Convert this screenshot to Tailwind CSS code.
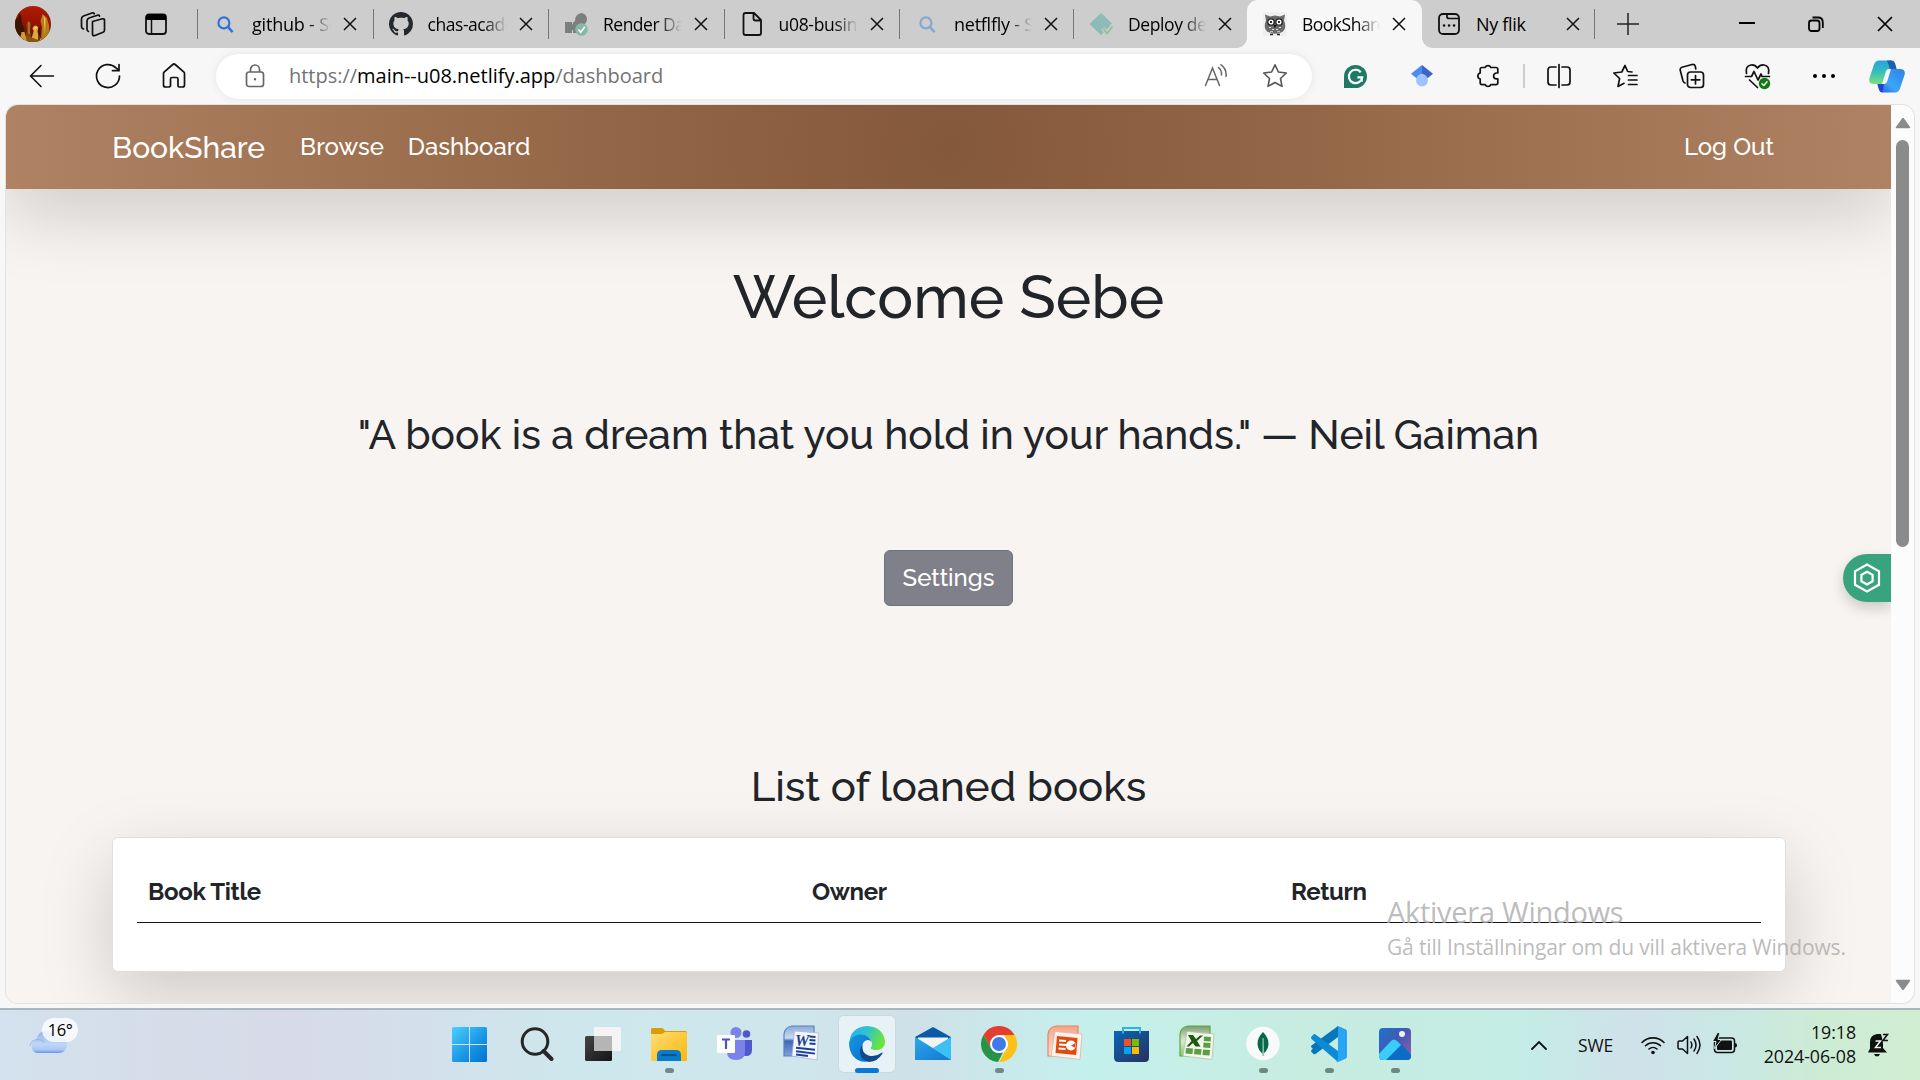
<!DOCTYPE html>
<html lang="sv">
<head>
<meta charset="utf-8">
<title>BookShare</title>
<script src="https://cdn.jsdelivr.net/npm/@tailwindcss/browser@4"></script>
</head>
<body class="w-[1920px] h-[1080px] overflow-hidden flex flex-col bg-[#f7f7f7] font-['Open_Sans','Noto_Sans',sans-serif] text-black">
<svg class="hidden">
  <symbol id="x" viewBox="0 0 14 14"><path d="M1 1l12 12M13 1L1 13" fill="none" stroke="#111" stroke-width="1.5"/></symbol>
  <symbol id="mag" viewBox="0 0 18 18"><path d="M11.8 11.8L16.5 17" stroke="currentColor" stroke-width="2.6" fill="none"/><circle cx="7.3" cy="7.3" r="5.8" fill="none" stroke="currentColor" stroke-width="2.3"/></symbol>
</svg>

<!-- Tab strip -->
<header class="h-12 shrink-0 bg-[#cdcdcd] flex items-center">
  <div class="w-[197px] flex items-center pl-[15px]">
    <svg class="w-9 h-9" viewBox="0 0 36 36"><defs><clipPath id="av"><circle cx="18" cy="18" r="18"/></clipPath><linearGradient id="avg" x1="0" y1="0" x2="0" y2="1"><stop offset="0" stop-color="#b01e04"/><stop offset=".5" stop-color="#960f00"/><stop offset="1" stop-color="#3a1a04"/></linearGradient></defs>
      <g clip-path="url(#av)"><path d="M0 0h36v36H0z" fill="url(#avg)"/><path d="M0 36V14l3-2 1-5 2 3 1 8 2 4v14z" fill="#3a1503"/><path d="M10 34l2-10-1-5 2.500-5 2.500 4-1 6 2 10z" fill="#7a4710"/><path d="M13 16h2v12h-2z" fill="#a8701c"/><path d="M26 34l1-13-1.500-6 2-7 4.500 4 2 7 1 15z" fill="#b67a18"/><path d="M28.500 9l2 4-.5 16z" fill="#f0c254"/><path d="M16.500 36c0-6 2-8 2-11.500a2.800 2.800 0 1 1 4 0c0 4 3 5 4 11.500z" fill="#e0a638"/><path d="M0 31q8-4 18 1t18-1v5H0z" fill="#8a5210"/><circle cx="20.500" cy="22" r="1.300" fill="#f4d27a"/><path d="M5 36l1.500-10h3L12 36z" fill="#d69a35"/><path d="M24 22v12" stroke="#3a1503" stroke-width="1.500"/></g></svg>
    <svg class="w-7 h-7 ml-[28px]" viewBox="0 0 28 28" fill="none" stroke="#111" stroke-width="1.7" stroke-linejoin="round" stroke-linecap="round"><path d="M13.500 11.500l10-2.700q2-.4 2 1.600v9.800q0 1.500-1.500 2l-8 3.300q-2.500.8-2.500-1.500z"/><path d="M9.500 21.500q-1.500-.5-1.500-2.500V11q0-2 2-3l8.500-2.800q1.800-.3 2 1"/><path d="M4.500 19q-2-.5-2-3V9q0-2 2-3L13 3q1.800-.4 2.200.8"/></svg>
    <svg class="w-6 h-6 ml-[37px]" viewBox="0 0 24 24"><rect x="2" y="2.500" width="20" height="19.500" rx="3" fill="none" stroke="#111" stroke-width="1.8"/><path d="M2 5q0-3 3-3h14q3 0 3 3v3H2z" fill="#000"/><path d="M7.500 8v14" stroke="#111" stroke-width="1.500"/></svg>
  </div>

  <div class="w-[175.5px] h-12 flex items-center">
    <div class="w-px h-[30px] bg-[#777]"></div>
    <div class="w-6 ml-[15px] flex justify-center"><svg class="w-[17px] h-[17px] text-[#2d74d4]"><use href="#mag"/></svg></div>
    <div class="ml-[15px] w-[79px] overflow-hidden whitespace-nowrap text-[18px] tracking-[-0.2px] mask-r-from-70% mask-r-to-100%">github - Sök</div>
    <svg class="w-3.5 h-3.5 ml-3"><use href="#x"/></svg>
  </div>
  <div class="w-[175.5px] h-12 flex items-center">
    <div class="w-px h-[30px] bg-[#777]"></div>
    <svg class="w-6 h-6 ml-[15px]" viewBox="0 0 16 16"><path fill="#24292f" d="M8 0C3.580 0 0 3.580 0 8c0 3.540 2.290 6.530 5.470 7.590.4.070.55-.17.55-.38 0-.19-.01-.82-.01-1.490-2.010.37-2.530-.49-2.690-.94-.09-.23-.48-.94-.82-1.130-.28-.15-.68-.52-.01-.53.63-.01 1.080.58 1.230.82.72 1.210 1.870.87 2.330.66.070-.52.280-.87.510-1.070-1.780-.2-3.640-.89-3.640-3.950 0-.87.310-1.590.82-2.150-.08-.2-.36-1.020.08-2.120 0 0 .67-.21 2.200.82.640-.18 1.320-.27 2-.27s1.360.09 2 .27c1.530-1.040 2.200-.82 2.200-.82.440 1.100.160 1.920.080 2.120.510.560.820 1.270.820 2.150 0 3.070-1.870 3.750-3.650 3.950.290.250.540.730.540 1.480 0 1.070-.01 1.930-.01 2.200 0 .210.150.460.550.380A8.010 8.010 0 0 0 16 8c0-4.420-3.580-8-8-8z"/></svg>
    <div class="ml-[15px] w-[79px] overflow-hidden whitespace-nowrap text-[17.500px] tracking-[-0.45px] mask-r-from-70% mask-r-to-100%">chas-academy</div>
    <svg class="w-3.5 h-3.5 ml-3"><use href="#x"/></svg>
  </div>
  <div class="w-[175.5px] h-12 flex items-center">
    <div class="w-px h-[30px] bg-[#777]"></div>
    <svg class="w-6 h-6 ml-[15px]" viewBox="0 0 24 24"><path d="M1 10h7v11H1zM9 21V15h4v6zM8 13q1-3 3-4 0-7 6.500-8Q23 2 23 7.500q-.5 4-4 5.500-5 1-6 5H8z" fill="#7b7f7f"/><circle cx="17.500" cy="17.500" r="6.300" fill="#86b8a8"/><path d="M14.500 17.500l2.300 2.700 4-5.500" fill="none" stroke="#fff" stroke-width="1.600"/></svg>
    <div class="ml-[15px] w-[79px] overflow-hidden whitespace-nowrap text-[17.500px] tracking-[-0.5px] mask-r-from-70% mask-r-to-100%">Render Dash</div>
    <svg class="w-3.5 h-3.5 ml-3"><use href="#x"/></svg>
  </div>
  <div class="w-[175.5px] h-12 flex items-center">
    <div class="w-px h-[30px] bg-[#777]"></div>
    <svg class="w-6 h-6 ml-[15px]" viewBox="0 0 24 24" fill="none" stroke="#111" stroke-width="1.800" stroke-linejoin="round"><path d="M3.500 3q0-2 2-2H14l7 7v13q0 2-2 2H5.500q-2 0-2-2zM13.500 1v5.500q0 2 2 2H21"/></svg>
    <div class="ml-[15px] w-[79px] overflow-hidden whitespace-nowrap text-[17.500px] tracking-[-0.3px] mask-r-from-70% mask-r-to-100%">u08-business</div>
    <svg class="w-3.5 h-3.5 ml-3"><use href="#x"/></svg>
  </div>
  <div class="w-[174px] h-12 flex items-center">
    <div class="w-px h-[30px] bg-[#777]"></div>
    <div class="w-6 ml-[15px] flex justify-center"><svg class="w-[17px] h-[17px] text-[#86a6d4]"><use href="#mag"/></svg></div>
    <div class="ml-[15px] w-[78px] overflow-hidden whitespace-nowrap text-[18px] tracking-[-0.25px] mask-r-from-70% mask-r-to-100%">netflfly - Sök</div>
    <svg class="w-3.5 h-3.5 ml-3"><use href="#x"/></svg>
  </div>
  <div class="w-[174px] h-12 flex items-center">
    <div class="w-px h-[30px] bg-[#777]"></div>
    <svg class="w-6 h-6 ml-[15px]" viewBox="0 0 24 24"><path d="M12 1.500L23 12 12 22.500 1 12z" fill="#8cbcb8" stroke="#8cbcb8" stroke-linejoin="round"/><path d="M14 16.500l4 5 6-9" fill="none" stroke="#cdcdcd" stroke-width="4"/><path d="M14.500 17l3.500 4.500 5.500-7" fill="none" stroke="#8fc39a" stroke-width="2"/></svg>
    <div class="ml-[15px] w-[78px] overflow-hidden whitespace-nowrap text-[17.500px] tracking-[-0.4px] mask-r-from-70% mask-r-to-100%">Deploy details</div>
    <svg class="w-3.5 h-3.5 ml-3"><use href="#x"/></svg>
  </div>
  <div class="w-[175px] h-12 relative flex items-center bg-[#f7f7f7] rounded-t-[11px]">
    <div class="absolute -left-2.5 bottom-0 size-2.5 bg-[radial-gradient(circle_at_0_0,#cdcdcd_9.500px,#f7f7f7_10px)]"></div>
    <div class="absolute -right-2.5 bottom-0 size-2.5 bg-[radial-gradient(circle_at_100%_0,#cdcdcd_9.500px,#f7f7f7_10px)]"></div>
    <svg class="w-6 h-6 ml-4" viewBox="0 0 24 24"><path d="M0 0h24v24H0z" fill="#efefef"/><path d="M2 2.500l5 2 5-1 5 1 5-2-1 6q3 7-1 11-7 4.500-16 0-4-4-1-11z" fill="#6a6a6a"/><g fill="#fff" stroke="#222" stroke-width="1.300"><circle cx="8" cy="10" r="3.200"/><circle cx="16" cy="10" r="3.200"/></g><circle cx="8" cy="10" r="1.100"/><circle cx="16" cy="10" r="1.100"/><path d="M10.500 13h3L12 16z"/><path d="M6 16q1-2 2 0m1 2q1-2 2 0m2 0q1-2 2 0m1-2q1-2 2 0M7 20q2-1 3 0m4 0q2-1 3 0" stroke="#ddd" fill="none"/><path d="M7 22.500h3m4 0h3" stroke="#222" stroke-width="1.500"/></svg>
    <div class="ml-[15px] w-[78px] overflow-hidden whitespace-nowrap text-[17.500px] tracking-[-0.5px] mask-r-from-70% mask-r-to-100%">BookShare</div>
    <svg class="w-3.5 h-3.5 ml-3"><use href="#x"/></svg>
  </div>
  <div class="w-[174px] h-12 flex items-center">
    <svg class="w-6 h-6 ml-[15px]" viewBox="0 0 24 24"><rect x="2" y="2" width="20" height="20" rx="4" fill="none" stroke="#111" stroke-width="1.800"/><path d="M10 2v2.500q0 2 2 2h10" fill="none" stroke="#111" stroke-width="1.700"/><path d="M7 13.500h.1M12 13.500h.1M17 13.500h.1" stroke="#111" stroke-width="2.600" stroke-linecap="round"/></svg>
    <div class="ml-[15px] w-[77px] whitespace-nowrap text-[18px] tracking-[-0.3px]">Ny flik</div>
    <svg class="w-3.5 h-3.5 ml-[13px]"><use href="#x"/></svg>
    <div class="w-px h-[30px] bg-[#777] ml-[14px]"></div>
  </div>
  <svg class="w-[22px] h-[22px] ml-[21px]" viewBox="0 0 22 22"><path d="M11 0v22M0 11h22" stroke="#222" stroke-width="1.500"/></svg>
  <div class="ml-auto flex items-center pr-[27px] gap-[53px]">
    <svg class="w-4 h-4" viewBox="0 0 16 16"><path d="M0 7h16" stroke="#000" stroke-width="2"/></svg>
    <svg class="w-4 h-4" viewBox="0 0 16 16" fill="none" stroke="#000" stroke-width="1.800"><rect x="1" y="4.500" width="10.500" height="10.500" rx="2.500"/><path d="M4.500 1.500H10q4.800 0 4.800 5V12"/></svg>
    <svg class="w-4 h-4" viewBox="0 0 16 16"><path d="M1 1l14 14M15 1L1 15" stroke="#000" stroke-width="1.700"/></svg>
  </div>
</header>

<!-- Address bar -->
<div class="h-[57px] shrink-0 flex items-center bg-[#f7f7f7] pb-px">
  <svg class="w-7 h-7 ml-7" viewBox="0 0 28 28" fill="none" stroke="#111" stroke-width="1.600" stroke-linecap="round" stroke-linejoin="round"><path d="M25.500 14H2.500M13 3.500L2.500 14 13 24.500"/></svg>
  <svg class="w-7 h-7 ml-[38px]" viewBox="0 0 28 28" fill="none" stroke="#111" stroke-width="1.700" stroke-linecap="round"><path d="M25.500 14A11.500 11.500 0 1 1 22 5.800L24.500 8"/><path d="M25 2.500V8.700H18.500"/></svg>
  <svg class="w-7 h-7 ml-[38px]" viewBox="0 0 28 28" fill="none" stroke="#111" stroke-width="1.700" stroke-linejoin="round"><path d="M3.500 11.500q0-1 .8-1.700l8.500-7.300q1.200-1 2.400 0l8.500 7.300q.8.700.8 1.700V23q0 2-2 2h-3.300q-1.200 0-1.200-1.200V17q0-1.500-1.500-1.500h-4.500q-1.500 0-1.500 1.500v6.800Q10 25 8.800 25H5.500q-2 0-2-2z"/></svg>
  <div class="ml-7 w-[1096px] h-[45px] rounded-full bg-white shadow-[0_0_8px_rgba(0,0,0,0.08)] flex items-center">
    <svg class="w-6 h-6 ml-[27px]" viewBox="0 0 24 24" fill="none" stroke="#666" stroke-width="1.700"><rect x="3.500" y="8" width="17" height="14.500" rx="2.500"/><path d="M7.500 8V5.500a4.500 4.500 0 0 1 9 0V8"/><circle cx="12" cy="15.300" r="1.200" fill="#666" stroke="none"/></svg>
    <div class="ml-[22px] text-[20px] tracking-[-0.02px] text-[#737373] whitespace-nowrap">https://<span class="text-black">main--u08.netlify.app</span>/dashboard</div>
    <svg class="w-6 h-6 ml-auto" viewBox="0 0 24 24" fill="none" stroke="#666" stroke-width="1.500" stroke-linecap="round"><path d="M1.500 21.500L8.500 4l7 17.500M3.800 15.500h9.400"/><path d="M14.500 3.500q3.500 3 3 7.500M17 .8q6 4.200 5 11.700"/></svg>
    <svg class="w-[26px] h-[26px] ml-[34px] mr-6" viewBox="0 0 26 26" fill="none" stroke="#555" stroke-width="1.600" stroke-linejoin="round"><path d="M13 1.800l3.400 7.200 7.900 1-5.800 5.500 1.500 7.900-7-3.900-7 3.900 1.500-7.900L1.700 10l7.900-1z"/></svg>
  </div>
  <div class="ml-[10px] flex items-center">
    <div class="w-[66.5px] flex justify-center"><svg class="w-[23px] h-[23px]" viewBox="0 0 24 24"><path d="M12 0a12 12 0 1 1 0 24H0V12A12 12 0 0 1 12 0z" fill="#1f7a65"/><path d="M17.500 7.500A7 7 0 1 0 19 13h-5M18.500 13v4.500" fill="none" stroke="#fff" stroke-width="2.300"/></svg></div>
    <div class="w-[66.5px] flex justify-center"><svg class="w-[22px] h-[22px]" viewBox="0 0 24 24"><circle cx="12" cy="17" r="6.500" fill="#a0c3ff"/><path d="M12 0L0 9.500l6 5q2-4.500 6-4.500z" fill="#4c8bf5"/><path d="M12 0l12 9.500-6 5q-2-4.500-6-4.500z" fill="#3b66c6"/></svg></div>
    <div class="w-[66.5px] flex justify-center"><svg class="w-[26px] h-[26px]" viewBox="0 0 26 26" fill="none" stroke="#111" stroke-width="1.700" stroke-linejoin="round"><path d="M7 4.500h3.200a3 3 0 0 1 5.600 0H21q1.800 0 1.800 1.800V10h-1.300a2.900 2.900 0 0 0 0 5.800h1.300v4q0 1.800-1.800 1.800h-5.200a3 3 0 0 1-5.600 0H7q-1.800 0-1.800-1.800V16a3.100 3.100 0 0 1 0-6V6.300Q5.200 4.500 7 4.500z"/></svg></div>
    <div class="w-[2px] h-6 bg-[#ccc] ml-px mr-px"></div>
    <div class="w-[66.4px] flex justify-center"><svg class="w-[26px] h-[26px]" viewBox="0 0 26 26" fill="none" stroke="#111" stroke-width="1.700" stroke-linecap="round"><path d="M13 1.500v23M10 4H5Q2 4 2 7v12q0 3 3 3h5M16 4h5q3 0 3 3v12q0 3-3 3h-5"/></svg></div>
    <div class="w-[66.4px] flex justify-center"><svg class="w-[26px] h-[26px]" viewBox="0 0 26 26" fill="none" stroke="#111" stroke-width="1.700" stroke-linejoin="round" stroke-linecap="round"><path d="M20 9l-4.300-.5L13 2.500 9.800 9l-8 1 5.800 5.500-1.600 8 6-3.200M16.500 12.500H25M16.500 17H25M16.500 21.500H25"/></svg></div>
    <div class="w-[66.4px] flex justify-center pl-px"><svg class="w-[26px] h-[26px]" viewBox="0 0 26 26" fill="none" stroke="#111" stroke-width="1.700" stroke-linecap="round"><rect x="8.500" y="9" width="16" height="15.500" rx="3"/><path d="M16.500 12.500v8.500M12.300 16.800h8.500M6 20q-1.500-.5-2-2L1.300 7.500Q.7 5 3 4.200L13 1.500q2.500-.5 3.300 1.800L16.800 6"/></svg></div>
    <div class="w-[66.4px] flex justify-center"><svg class="w-[27px] h-[27px]" viewBox="0 0 27 27" fill="none" stroke="#111" stroke-width="1.700" stroke-linejoin="round" stroke-linecap="round"><path d="M2.500 10.500Q1 3 7 2q4-.5 6.500 3Q16 1.500 20 2q6 1 4.500 8.500M1.500 13.500h6l2.500-5 4 8.500 3-6 1 2.500h7.500M5.500 17l8 7.500"/><circle cx="20.500" cy="20.500" r="5.700" fill="#107c10" stroke="none"/><path d="M18 20.800l1.800 1.700 3.200-3.700" stroke="#fff" stroke-width="1.400"/></svg></div>
    <div class="w-[66.4px] flex justify-center gap-[5px]"><i class="size-1 rounded-full bg-black"></i><i class="size-1 rounded-full bg-black"></i><i class="size-1 rounded-full bg-black"></i></div>
    <div class="w-[60px] flex justify-center"><svg class="w-9 h-[33px]" viewBox="0 0 36 33"><defs><linearGradient id="cp1" x1="0" y1="0" x2="0" y2="1"><stop offset="0" stop-color="#28a4e0"/><stop offset=".5" stop-color="#36bfb8"/><stop offset="1" stop-color="#7de07a"/></linearGradient><linearGradient id="cp2" x1="0" y1="1" x2="1" y2="0"><stop offset="0" stop-color="#2a4fe0"/><stop offset=".4" stop-color="#3aa8f5"/><stop offset="1" stop-color="#2f7fe8"/></linearGradient></defs><path d="M10 .5h12q3 0 4 3L27.500 9H20q-2.500 0-3.300 3L13 24H5q-6 0-4.500-6L5 4.500Q6.500.5 10 .5z" fill="url(#cp1)"/><path d="M18 .5h4q3 0 4 3L27.500 9H21z" fill="#1b5fae"/><path d="M26 32.500H14q-3 0-4-3L8.500 24H15q2.500 0 3.300-3L22 9h9q6 0 4.500 6L31 28.500q-1.500 4-5 4z" fill="url(#cp2)"/><path d="M8.500 24H15l-1.500 8.500q-2.700-.3-3.500-3z" fill="#2443cf"/></svg></div>
  </div>
</div>

<!-- Browser viewport -->
<div class="h-[903px] shrink-0 px-1.5 pb-[5px] bg-[#f7f7f7]">
  <div class="relative h-full flex rounded-[12px] overflow-hidden bg-[#fcfcfc] shadow-[0_0_0_1px_#e2e2e2] isolate">
    <div class="relative w-[1885px] h-full overflow-hidden bg-[#f8f4f1] font-['Raleway','Lato',sans-serif] text-[#212529] flex flex-col">
      <nav class="h-[84px] shrink-0 flex items-center px-[106px] text-white text-[24px] font-medium bg-[radial-gradient(circle,#84583a_0%,#936747_40%,#966a49_43%,#ae8262_100%)] shadow-[0_24px_72px_rgba(0,0,0,0.175)]">
        <a class="text-[30px] leading-none pt-0.5">BookShare</a>
        <a class="ml-[35px]">Browse</a>
        <a class="ml-6">Dashboard</a>
        <a class="ml-auto mr-[11px]">Log Out</a>
      </nav>
      <h1 class="mt-[72px] h-[72px] leading-[72px] text-[60px] font-medium text-center">Welcome Sebe</h1>
      <p class="mt-[77px] h-[50px] leading-[50px] text-[40.800px] font-medium text-center whitespace-nowrap">"A book is a dream that you hold in your hands." — Neil Gaiman</p>
      <button class="mt-[90px] mx-auto w-[129px] h-14 shrink-0 rounded-[6px] border border-[#6c757d] bg-[#80808a] text-white text-[24px] font-medium">Settings</button>
      <h3 class="mt-[156px] h-[50px] leading-[50px] text-[42px] font-medium text-center">List of loaned books</h3>
      <section class="mt-[25px] ml-[106px] mr-[105px] h-[135px] shrink-0 rounded-[6px] border border-[#dfdfdf] bg-white p-6 shadow-[0_24px_72px_rgba(0,0,0,0.175)]">
        <div class="flex h-[61px] items-center border-b border-[#15121c] text-[24px] font-bold tracking-[-0.32px] pl-[11px]">
          <div class="w-[664px]">Book Title</div>
          <div class="w-[479px]">Owner</div>
          <div>Return</div>
        </div>
      </section>
      <!-- Extension side handle -->
      <div class="absolute right-0 top-[449px] w-12 h-12 rounded-l-full bg-[#38a37f] shadow-[0_6px_14px_rgba(0,0,0,0.18)] flex items-center justify-center">
        <svg class="w-[30px] h-[30px]" viewBox="0 0 30 30" fill="none" stroke="#fff" stroke-width="2.200"><path d="M15 1.500l12 6.800v13.500l-12 6.700-12-6.700V8.300z"/><path d="M15 8.800l5.600 3.100v6.400L15 21.500l-5.600-3.200v-6.400z"/></svg>
      </div>
    </div>
    <div class="w-[23px] flex flex-col items-center">
      <svg class="w-4 h-3 mt-[12px]" viewBox="0 0 16 12"><path d="M8 1.500L14.500 10.500h-13z" fill="#8b8b8b" stroke="#8b8b8b" stroke-width="1.500" stroke-linejoin="round"/></svg>
      <div class="mt-[11px] w-[13px] h-[407px] rounded-full bg-[#8b8b8b]"></div>
      <svg class="w-4 h-3 mt-auto mb-[12px]" viewBox="0 0 16 12"><path d="M8 10.500L14.500 1.500h-13z" fill="#8b8b8b" stroke="#8b8b8b" stroke-width="1.500" stroke-linejoin="round"/></svg>
    </div>
  </div>
</div>

<!-- Windows activation watermark -->
<div class="absolute left-[1387px] top-[892px] text-[#aaa]/80 whitespace-nowrap">
  <div class="text-[29px] leading-[40px] tracking-[-0.28px]">Aktivera Windows</div>
  <div class="text-[21px] leading-[30px] tracking-[-0.16px]">Gå till Inställningar om du vill aktivera Windows.</div>
</div>

<!-- Taskbar -->
<footer class="h-[72px] shrink-0 flex items-start border-t-2 border-[#a9b6bd] bg-[linear-gradient(90deg,#d3e2ee_0%,#d5dde9_9%,#d7dae8_15%,#d3e0ec_22%,#cde8ec_31%,#cfe6ec_42%,#cfe0e8_47%,#c4f0ec_57%,#c7ece0_68%,#c4ede5_79%,#cfe1ea_85%,#c9e8e4_90%,#cdecd4_95%,#d1eed3_100%)] bg-origin-border">
  <div class="relative w-[436px] h-[70px]">
    <svg class="absolute left-[29px] top-[20px] w-[38px] h-[24px]" viewBox="0 0 38 24"><defs><linearGradient id="cl" x1="0" y1="0" x2="0" y2="1"><stop offset="0" stop-color="#8fb2f2"/><stop offset=".6" stop-color="#c0d6f5"/><stop offset=".85" stop-color="#a9c8f5"/><stop offset="1" stop-color="#6a93e8"/></linearGradient></defs><path d="M8 23a7 7 0 0 1-.5-13.500Q9 1 17 1q7 0 9 6h4a8 8 0 0 1 0 16z" fill="url(#cl)"/><path d="M1 16q1-6 6.500-6.500 5-.5 8 3" fill="none" stroke="#7d9fe8" stroke-width="1" opacity=".6"/></svg>
    <div class="absolute left-[42px] top-[8px] w-9 h-6 rounded-full bg-white/80 text-[16.500px] leading-6 tracking-[-0.5px] text-center">16°</div>
  </div>
  <div class="flex">
    <div class="w-[66px] h-[70px] pt-[17px] flex flex-col items-center"><svg class="w-[35px] h-[35px]" viewBox="0 0 35 35"><defs><linearGradient id="wn" x1="0" y1="0" x2="1" y2="1"><stop offset="0" stop-color="#4bd0ff"/><stop offset=".6" stop-color="#1793e4"/><stop offset="1" stop-color="#0272cf"/></linearGradient></defs><path d="M1.500 0H17v17H0V1.500Q0 0 1.500 0zM18 0h15.500Q35 0 35 1.500V17H18zM0 18h17v17H1.500Q0 35 0 33.500zM18 18h17v15.500q0 1.500-1.500 1.500H18z" fill="url(#wn)"/></svg></div>
    <div class="w-[66px] h-[70px] pt-[17px] pl-1 flex flex-col items-center"><svg class="w-[34px] h-[34px]" viewBox="0 0 34 34" fill="none" stroke="#262626"><circle cx="15" cy="14.500" r="12.800" stroke-width="3"/><path d="M23.500 24l8 8" stroke-width="4" stroke-linecap="round"/></svg></div>
    <div class="w-[66px] h-[70px] pt-[17px] pl-1 flex flex-col items-center"><svg class="w-9 h-[34px]" viewBox="0 0 36 34"><defs><linearGradient id="tvd" x1="0" y1="0" x2="1" y2="1"><stop offset="0" stop-color="#444"/><stop offset="1" stop-color="#151515"/></linearGradient></defs><rect x="0" y="9" width="27" height="25" rx="1.500" fill="url(#tvd)"/><rect x="9" y="0" width="27" height="24" rx="1.500" fill="#f4f4f4"/><path d="M9 9h18v15H10.500Q9 24 9 22.500z" fill="#b5b5b5"/></svg></div>
    <div class="w-[66px] h-[70px] pt-[18px] ml-[2px] flex flex-col items-center"><svg class="w-9 h-[33px]" viewBox="0 0 36 33"><defs><linearGradient id="fo" x1="0" y1="0" x2="1" y2="1"><stop offset="0" stop-color="#ffdd75"/><stop offset="1" stop-color="#fab70a"/></linearGradient></defs><path d="M0 1.500Q0 0 1.500 0H11q1.500 0 3 3h20.500Q36 3 36 4.500V12H0z" fill="#dc9c06"/><path d="M0 6h10q2 0 4-2h20.500Q36 4 36 5.500v26q0 1.500-1.500 1.500h-33Q0 33 0 31.500z" fill="url(#fo)"/><path d="M6 33v-6q0-5 5-5h14q5 0 5 5v6z" fill="#0a7bcb"/><path d="M11 27h14" stroke="#0a518f" stroke-width="1.800" stroke-linecap="round"/></svg><i class="mt-[7px] w-[9px] h-[5px] rounded-full bg-[#748a89]"></i></div>
    <div class="w-[66px] h-[70px] pt-[17px] flex flex-col items-center"><svg class="w-9 h-9" viewBox="0 0 36 36"><circle cx="19" cy="5.500" r="5.500" fill="#7b83eb"/><circle cx="29.500" cy="7" r="3.800" fill="#5059c9"/><path d="M24 13h11v10q0 6-6 6-5 0-5-5z" fill="#5059c9"/><path d="M10 13h18v12q0 8-9 8t-9-8z" fill="#7b83eb"/><rect x="0" y="8" width="18" height="18" rx="1" fill="#fff"/><path d="M5 12.500h8M9 12.500V22" stroke="#4b53bc" stroke-width="2.200" fill="none"/></svg></div>
    <div class="w-[66px] h-[70px] pt-[15px] flex flex-col items-center"><svg class="w-[36px] h-[36px]" viewBox="0 0 36 36"><defs><linearGradient id="wd" x1="0" y1="0" x2="0" y2="1"><stop offset="0" stop-color="#8aa9dd"/><stop offset=".4" stop-color="#c8dbf3"/><stop offset=".5" stop-color="#4067b5"/><stop offset="1" stop-color="#7da3dc"/></linearGradient></defs><path d="M9 1h22v30H1V9Q2 2 9 1z" fill="url(#wd)" stroke="#5f80bd" stroke-width="1.200"/><path d="M11.500 6l24 2-1.500 27L9 31z" fill="#f4f7fd" stroke="#aab8d2" stroke-width=".8"/><text x="12" y="20.500" font-family="Liberation Serif" font-weight="700" font-style="italic" font-size="16" fill="#1d3f96">W</text><path d="M26.500 11.500l6 .5M26.500 15l6 .5M26.500 18.500l6 .5M13 22.800l19 2M13 26.300l19 2.300M13 29.500l12 1.500" stroke="#1d3f96" stroke-width="1.900"/></svg></div>
    <div class="w-[66px] h-[70px] pt-[6px] flex justify-center"><div class="w-14 h-14 rounded-[5px] bg-[#e8f2f6] shadow-[0_0_0_1px_#c9dae0] flex flex-col items-center pt-[10px]"><svg class="w-9 h-9 shrink-0" viewBox="0 0 36 36"><defs><linearGradient id="e1" x1="0" y1="0" x2="1" y2=".3"><stop offset="0" stop-color="#2cb0ee"/><stop offset=".5" stop-color="#2bc3d2"/><stop offset="1" stop-color="#6ae33e"/></linearGradient><linearGradient id="e2" x1="0" y1="0" x2="1" y2="1"><stop offset="0" stop-color="#1696e0"/><stop offset="1" stop-color="#0a6dcc"/></linearGradient></defs><path d="M.3 16Q2 1 18 0q16 1 18 15 0 8-7 9-7 0-7.500-2 2-2 1.500-5-1-6-8-7Q4 9 .3 16z" fill="url(#e1)"/><path d="M.2 16Q4 8 12 8.500q9 1 10.500 7.500-1-2-4-2-5 1-5.500 7 0 9 8 14Q11 38 4 30-.5 24 .2 16z" fill="url(#e2)"/><path d="M13.500 19q-1 8 6 10.500 7 2 13.500-3 1 0 .5 1-5 8-13 8.500-8-1-9.500-9-.5-5 2.500-8z" fill="#114a8b"/></svg><i class="mt-[6px] w-6 h-[5px] shrink-0 rounded-full bg-[#0a78d4]"></i></div></div>
    <div class="w-[66px] h-[70px] pt-[17px] flex flex-col items-center"><svg class="w-9 h-[33px]" viewBox="0 0 36 33"><defs><linearGradient id="ml" x1="0" y1="0" x2="1" y2="1"><stop offset="0" stop-color="#2ba8e8"/><stop offset="1" stop-color="#1377d2"/></linearGradient></defs><path d="M0 10L18 0l18 10v6H0z" fill="#0a5aa8"/><path d="M3 10.500h30v10L18 26 3 20z" fill="#f3f3f3"/><path d="M0 10l18 11L36 10v23H0z" fill="#3cc0f4"/><path d="M0 10l36 23H0z" fill="url(#ml)"/></svg></div>
    <div class="w-[66px] h-[70px] pt-[16px] flex flex-col items-center"><svg class="w-9 h-9" viewBox="0 0 36 36"><path d="M2.400 9A18 18 0 0 1 33.600 9H18L10.200 22.500z" fill="#e33e30"/><path d="M2.400 9l7.800 13.500Q13 27 18 27l4-.5L17 36A18 18 0 0 1 2.400 9z" fill="#269447"/><path d="M33.600 9A18 18 0 0 1 18 36l7.800-13.500Q28 16 23 9z" fill="#fdc116"/><circle cx="18" cy="18" r="9" fill="#fff"/><circle cx="18" cy="18" r="7" fill="#3f79ea"/></svg><i class="mt-[6px] w-[9px] h-[5px] rounded-full bg-[#748a89]"></i></div>
    <div class="w-[66px] h-[70px] pt-[15px] flex flex-col items-center"><svg class="w-[36px] h-[36px]" viewBox="0 0 36 36"><defs><linearGradient id="pp" x1="0" y1="0" x2="0" y2="1"><stop offset="0" stop-color="#f5a58a"/><stop offset="1" stop-color="#fde3d8"/></linearGradient></defs><path d="M9 1h22v30H1V9Q2 2 9 1z" fill="url(#pp)" stroke="#ee8258" stroke-width="1.200"/><path d="M8 6.500l27 2.500-2 25.500L4 31z" fill="#fdf2ec" stroke="#d9b6a8" stroke-width=".8"/><path d="M10 11l20.500 2-1.300 17L8.500 28z" fill="#e2490f"/><path d="M12 15.500l7 .5M12 19.500l7 .5M11.500 23.500l7 .5" stroke="#fff" stroke-width="1.800"/><circle cx="24" cy="20.500" r="5" fill="#fff"/><path d="M24 20.500l4.500-2.500v5z" fill="#e2490f"/></svg></div>
    <div class="w-[66px] h-[70px] pt-[17px] flex flex-col items-center"><svg class="w-[35px] h-[35px]" viewBox="0 0 35 35"><defs><linearGradient id="st" x1="0" y1="0" x2="1" y2="1"><stop offset="0" stop-color="#0a66b8"/><stop offset="1" stop-color="#27305c"/></linearGradient></defs><path d="M9 7V1h17v6" fill="none" stroke="#29b3ee" stroke-width="2"/><path d="M0 4h35v26.500q0 4.500-4.500 4.500h-26Q0 35 0 30.500z" fill="url(#st)"/><path d="M9 6.500V3M26 6.500V3" stroke="#29b3ee" stroke-width="2"/><path d="M10 12h7v7h-7z" fill="#f25022"/><path d="M18 12h7v7h-7z" fill="#7fba00"/><path d="M10 20h7v7h-7z" fill="#00a4ef"/><path d="M18 20h7v7h-7z" fill="#ffb900"/></svg></div>
    <div class="w-[66px] h-[70px] pt-[15px] flex flex-col items-center"><svg class="w-[36px] h-[36px]" viewBox="0 0 36 36"><defs><linearGradient id="xl" x1="0" y1="0" x2="0" y2="1"><stop offset="0" stop-color="#7f9c76"/><stop offset=".5" stop-color="#d8ecd0"/><stop offset="1" stop-color="#8cc36e"/></linearGradient></defs><path d="M9 1h22v30H1V9Q2 2 9 1z" fill="url(#xl)" stroke="#5ca83c" stroke-width="1.200"/><path d="M8 6.500l27 2.500-2 25.500L4 31z" fill="#f2f7ec" stroke="#b3c4a6" stroke-width=".8"/><path d="M25 11.500l7 .5-.3 4.500-7-.5zM24.500 17.500l7 .5-.3 5-7-.5zM7 23l7 .5-.5 5.500-7-.5zM15.500 23.800l7 .5-.5 5.500-7-.5zM24 24.500l7 .5-.5 5.500-7-.5z" fill="#5c9e44"/><path d="M9 10h5l3 4 4-3.500h3L18 16l3.500 5.500h-5L14 18l-4 3.500H7.500L12.500 16z" fill="#1d5a12"/></svg></div>
    <div class="w-[66px] h-[70px] pt-[16px] flex flex-col items-center"><svg class="w-9 h-9" viewBox="0 0 36 36"><circle cx="18" cy="17.500" r="16.700" fill="#f8f9f9"/><path d="M18 6q-6 6-5.500 12.500Q13.500 25 18 28q4.500-3 5.500-9.500Q24 12 18 6z" fill="#04684a"/><path d="M17.500 12h1.200l.3 18h-1.600z" fill="#9cc5b0"/></svg><i class="mt-[6px] w-[9px] h-[5px] rounded-full bg-[#6e8a80]"></i></div>
    <div class="w-[66px] h-[70px] pt-[16px] flex flex-col items-center"><svg class="w-9 h-9" viewBox="0 0 36 36"><path d="M27 0l-9 9L4.500 23.500q-1 1-2 0l-2-2q-.8-1 0-2z" fill="#0a72bb"/><path d="M27 0v11L4.500 28q-1 .6-2 0l-2-2q-.8-1 0-2z" fill="#0877b9"/><path d="M.5 10.500l2-2q1-.8 2 0L27 25v11L.5 13q-1-1.200 0-2.500z" fill="#0b8bd6"/><path d="M27 0l8 3.500q1 .5 1 2v25q0 1.500-1 2L27 36q-1 .4-1.500-.5L27 33z" fill="#29a3f3"/></svg><i class="mt-[6px] w-[9px] h-[5px] rounded-full bg-[#6e8a80]"></i></div>
    <div class="w-[66px] h-[70px] pt-[18px] flex flex-col items-center"><svg class="w-8 h-8" viewBox="0 0 32 32"><defs><linearGradient id="ph" x1="0" y1="0" x2="1" y2=".8"><stop offset="0" stop-color="#1d74d0"/><stop offset=".5" stop-color="#3f5ab2"/><stop offset="1" stop-color="#8a5ab0"/></linearGradient><clipPath id="phc"><rect width="32" height="32" rx="4"/></clipPath></defs><g clip-path="url(#phc)"><path d="M0 0h32v32H0z" fill="url(#ph)"/><path d="M0 32l15-15q4-3 8 0l11 12v5z" fill="#0d6cc6"/><path d="M-2 28l14-15q3-3 6 0l4 4L6 33H-2z" fill="#3bcdf7"/><circle cx="23" cy="6" r="3" fill="#f0f0f8"/></g></svg><i class="mt-[8px] w-[9px] h-[5px] rounded-full bg-[#6e8a80]"></i></div>
  </div>
  <div class="ml-auto h-[70px] flex items-center pr-[31px] text-[#111]">
    <svg class="w-4 h-2.5" viewBox="0 0 16 10"><path d="M1 9l7-7 7 7" fill="none" stroke="#111" stroke-width="1.800" stroke-linecap="round"/></svg>
    <span class="ml-[31px] w-[37px] text-[17.500px] tracking-[-0.1px]">SWE</span>
    <svg class="w-6 h-6 ml-[26px]" viewBox="0 0 24 24" fill="none" stroke="#111" stroke-width="1.600" stroke-linecap="round"><path d="M1 9.500a15.500 15.500 0 0 1 22 0M4.500 12.800a10.700 10.700 0 0 1 15 0M8 16a6 6 0 0 1 8 0"/><circle cx="12" cy="19.500" r="1.800" fill="#111" stroke="none"/></svg>
    <svg class="w-6 h-6 ml-3" viewBox="0 0 24 24" fill="none" stroke="#111" stroke-width="1.500" stroke-linecap="round" stroke-linejoin="round"><path d="M10.500 3.500v17L5.500 16H2.500Q1 16 1 14.500v-5Q1 8 2.500 8h3z"/><path d="M14 9q1.700 3 0 6M17 6q4 6 0 12M20 3.500q6 8.500 0 17"/></svg>
    <svg class="w-6 h-6 ml-3" viewBox="0 0 24 24"><rect x="1.500" y="5" width="20" height="14.500" rx="3" fill="none" stroke="#111" stroke-width="1.500"/><rect x="4" y="7.500" width="15" height="9.500" rx="1" fill="#111"/><path d="M22 10q2 0 2 2.300t-2 2.300z" fill="#111"/><path d="M4.500-.5L-.5 8.500h3.500l-1.500 7 7-9H5l2-7z" fill="#111" stroke="#c9e8e4" stroke-width="1"/></svg>
    <div class="ml-[22px] w-[97px] text-right text-[17.800px] leading-6 tracking-[-0.05px] -mt-0.5">19:18<br>2024-06-08</div>
    <svg class="w-[22px] h-[24px] ml-[11px]" viewBox="0 0 22 24"><path d="M1 19.500l2-4V9q0-7 7-8h4l2 4v10l4 4.500zM7 21h6q-1 2.500-3 2.500T7 21z" fill="#111"/><path d="M14 0h8v10h-6z" fill="#cdecd4"/><path d="M16 1.500h4.500l-4.500 6h5" fill="none" stroke="#111" stroke-width="1.600"/><path d="M8.500 8h5l-5 6.500h5.500" fill="none" stroke="#e8f5ec" stroke-width="1.500"/></svg>
  </div>
</footer>
</body>
</html>
